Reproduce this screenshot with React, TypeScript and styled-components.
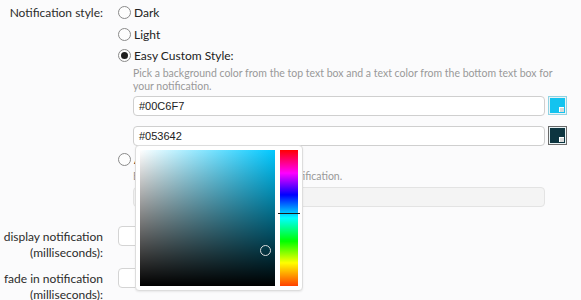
import styled, { createGlobalStyle } from "styled-components";

const GlobalStyle = createGlobalStyle`
  html, body {
    margin: 0;
    padding: 0;
    background: #fbfbfc;
  }
  body {
    font-family: Lato, "Liberation Sans", sans-serif;
    color: #333;
  }
`;

const Form = styled.div`
  width: 581px;
  height: 300px;
  overflow: hidden;
  padding-top: 2px;
  box-sizing: border-box;
`;

const Row = styled.div<{ top?: number }>`
  display: grid;
  grid-template-columns: 103px 1fr;
  column-gap: 15px;
  margin-top: ${(p) => p.top ?? 0}px;
`;

const Label = styled.div<{ pad?: number }>`
  display: flex;
  flex-direction: column;
  align-items: flex-end;
  white-space: nowrap;
  font-size: 12px;
  line-height: 16px;
  color: #2b2b2b;
  padding-top: ${(p) => p.pad ?? 0}px;
`;

const Options = styled.div`
  display: flex;
  flex-direction: column;
  padding-right: 14px;
`;

const Option = styled.div<{ top?: number }>`
  display: flex;
  align-items: center;
  gap: 3px;
  height: 21.5px;
  margin-top: ${(p) => p.top ?? 0}px;
  font-size: 12px;
  color: #222;
`;

const Radio = styled.span<{ checked?: boolean }>`
  width: 11px;
  height: 11px;
  border-radius: 50%;
  border: 1px solid #8a8a8a;
  background: #fdfdfd;
  display: inline-flex;
  align-items: center;
  justify-content: center;
  flex: none;
  &::after {
    content: "";
    width: 7px;
    height: 7px;
    border-radius: 50%;
    background: ${(p) => (p.checked ? "#1e1e1e" : "transparent")};
  }
`;

const Sub = styled.div`
  padding-left: 15px;
  display: flex;
  flex-direction: column;
`;

const Hint = styled.div`
  font-size: 10.5px;
  line-height: 13px;
  color: #999;
  white-space: nowrap;
`;

const ColorRow = styled.div<{ top?: number }>`
  position: relative;
  display: flex;
  align-items: center;
  gap: 3px;
  margin-top: ${(p) => p.top ?? 0}px;
`;

const TextBox = styled.div<{ disabled?: boolean }>`
  flex: 1;
  height: 20px;
  box-sizing: border-box;
  border: 1px solid ${(p) => (p.disabled ? "#e3e3e3" : "#cfcfcf")};
  border-radius: 4px;
  background: ${(p) => (p.disabled ? "#f4f4f4" : "#fff")};
  font-family: "Liberation Sans", Arial, sans-serif;
  font-size: 11px;
  line-height: 18px;
  padding-left: 5px;
  color: #222;
`;

const Swatch = styled.div<{ color: string; edge: string }>`
  position: relative;
  width: 19px;
  height: 19px;
  box-sizing: border-box;
  border: 1px solid ${(p) => p.edge};
  padding: 1px;
  background: #e9f3f5;
  flex: none;
  &::before {
    content: "";
    display: block;
    width: 100%;
    height: 100%;
    background: ${(p) => p.color};
  }
  &::after {
    content: "";
    position: absolute;
    right: 2px;
    bottom: 2px;
    width: 4px;
    height: 4px;
    background: #d8d8d8;
    border-top: 1px solid #fff;
    border-left: 1px solid #fff;
  }
`;

const Spacer = styled.div`
  width: 19px;
  flex: none;
`;

const Picker = styled.div`
  position: absolute;
  left: 2px;
  top: 19px;
  z-index: 5;
  display: flex;
  gap: 5px;
  padding: 4px;
  background: #fff;
  border: 1px solid #ddd;
  border-radius: 4px;
  box-shadow: 0 1px 2px rgba(0, 0, 0, 0.08);
`;

const SatVal = styled.div<{ hue: string }>`
  position: relative;
  width: 135px;
  height: 136px;
  background: linear-gradient(to top, #000, rgba(0, 0, 0, 0)),
    linear-gradient(to right, #fff, ${(p) => p.hue});
`;

const Cursor = styled.div`
  position: absolute;
  width: 9px;
  height: 9px;
  margin: -5px 0 0 -5px;
  border: 1px solid #ddd;
  border-radius: 50%;
`;

const HueBar = styled.div`
  position: relative;
  width: 18px;
  height: 136px;
  background: linear-gradient(
    to bottom,
    #ff0000 0%,
    #ff00ff 17%,
    #0000ff 33%,
    #00ffff 50%,
    #00ff00 67%,
    #ffff00 83%,
    #ff4000 100%
  );
`;

const HueMark = styled.div`
  position: absolute;
  left: -2px;
  right: -2px;
  height: 1px;
  background: #1a1a1a;
`;

const Field = styled.div`
  height: 20px;
  width: 60px;
  box-sizing: border-box;
  border: 1px solid #d4d4d4;
  border-radius: 4px;
  background: #fff;
`;

export default function App() {
  return (
    <Form>
      <GlobalStyle />
      <Row>
        <Label pad={3}>Notification style:</Label>
        <Options>
          <Option>
            <Radio />
            Dark
          </Option>
          <Option>
            <Radio />
            Light
          </Option>
          <Option>
            <Radio checked />
            Easy Custom Style:
          </Option>
          <Sub>
            <Hint>
              Pick a background color from the top text box and a text color from the bottom text box for
              <br />
              your notification.
            </Hint>
            <ColorRow top={3}>
              <TextBox>#00C6F7</TextBox>
              <Swatch color="#13c3ef" edge="#8fd3e3" />
            </ColorRow>
            <ColorRow top={10}>
              <TextBox>#053642</TextBox>
              <Swatch color="#0d3540" edge="#6a6a6a" />
              <Picker>
                <SatVal hue="#00c8ff">
                  <Cursor style={{ left: "92.5%", top: "74%" }} />
                </SatVal>
                <HueBar>
                  <HueMark style={{ top: "47%" }} />
                </HueBar>
              </Picker>
            </ColorRow>
          </Sub>
          <Option top={3}>
            <Radio />
            Advanced Custom Style:
          </Option>
          <Sub>
            <Hint>Enter your own CSS to style your notification.</Hint>
            <ColorRow top={4}>
              <TextBox disabled />
              <Spacer />
            </ColorRow>
          </Sub>
        </Options>
      </Row>
      <Row top={19}>
        <Label pad={3}>
          <span>display notification</span>
          <span>(milliseconds):</span>
        </Label>
        <Field />
      </Row>
      <Row top={7}>
        <Label pad={3}>
          <span>fade in notification</span>
          <span>(milliseconds):</span>
        </Label>
        <Field />
      </Row>
    </Form>
  );
}
